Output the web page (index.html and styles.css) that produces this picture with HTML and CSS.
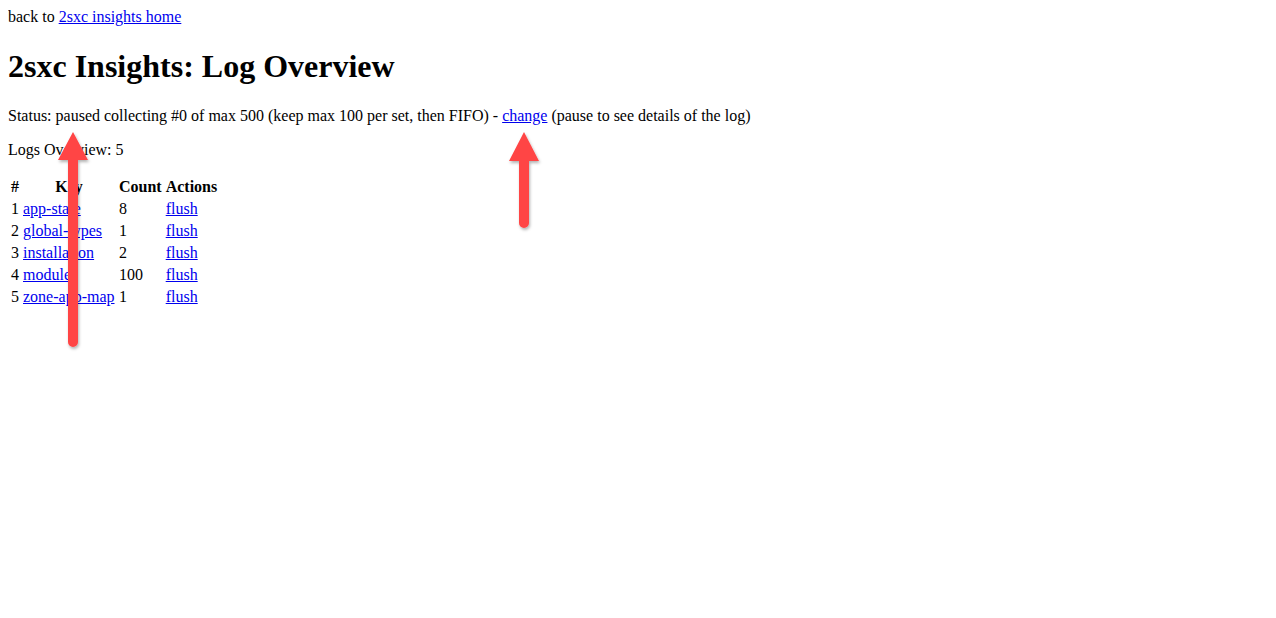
FILE: index.html
```html
<!DOCTYPE html>
<html>
<head>
<meta charset="utf-8">
<title>2sxc Insights: Log Overview</title>
<link rel="stylesheet" href="styles.css">
</head>
<body>
<div class="back">back to <a href="#">2sxc insights home</a></div>
<h1>2sxc Insights: Log Overview</h1>
<p>Status: paused collecting #0 of max 500 (keep max 100 per set, then FIFO) - <a href="#">change</a> (pause to see details of the log)</p>
<p>Logs Overview: 5</p>
<table>
  <thead>
    <tr><th>#</th><th class="key">Key</th><th>Count</th><th>Actions</th></tr>
  </thead>
  <tbody>
    <tr><td>1</td><td><a href="#">app-state</a></td><td>8</td><td><a href="#">flush</a></td></tr>
    <tr><td>2</td><td><a href="#">global-types</a></td><td>1</td><td><a href="#">flush</a></td></tr>
    <tr><td>3</td><td><a href="#">installation</a></td><td>2</td><td><a href="#">flush</a></td></tr>
    <tr><td>4</td><td><a href="#">module</a></td><td>100</td><td><a href="#">flush</a></td></tr>
    <tr><td>5</td><td><a href="#">zone-app-map</a></td><td>1</td><td><a href="#">flush</a></td></tr>
  </tbody>
</table>

<svg class="arrows" width="1276" height="618" viewBox="0 0 1276 618" xmlns="http://www.w3.org/2000/svg">
  <defs>
    <filter id="sh" x="-50%" y="-20%" width="200%" height="140%">
      <feDropShadow dx="1" dy="2" stdDeviation="1.5" flood-color="#000" flood-opacity="0.3"/>
    </filter>
  </defs>
  <g filter="url(#sh)" fill="#ff4545">
    <path d="M73 132 L88 160 L78 160 L78 342 A5 5 0 0 1 68 342 L68 160 L58 160 Z"/>
    <path d="M524 132 L539 161 L529 161 L529 223 A5 5 0 0 1 519 223 L519 161 L509 161 Z"/>
  </g>
</svg>
</body>
</html>
```
FILE: styles.css
```css
html, body {
  background: #fff;
}
body {
  margin: 8px;
  font-family: "Liberation Serif", "Times New Roman", serif;
  font-size: 16px;
  color: #000;
}
a {
  color: #0000ee;
}
h1 {
  font-size: 2em;
  line-height: 38px;
  margin: 0.67em 0;
  font-weight: bold;
}
p {
  margin: 1em 0;
}
table {
  border-spacing: 2px;
}
th, td {
  padding: 1px;
}
th {
  font-weight: bold;
  text-align: center;
}
th.key {
  min-width: 92px;
}
td {
  text-align: left;
}
.arrows {
  position: absolute;
  left: 0;
  top: 0;
  pointer-events: none;
}
```
